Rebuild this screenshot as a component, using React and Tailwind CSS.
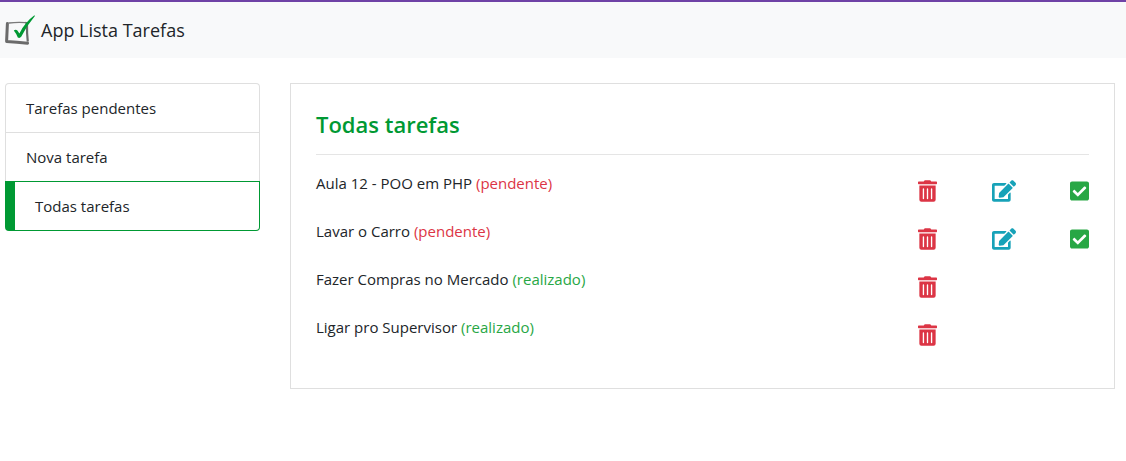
import { FaTrashAlt, FaEdit, FaCheckSquare } from "react-icons/fa";

const links = [
  { label: "Tarefas pendentes" },
  { label: "Nova tarefa" },
  { label: "Todas tarefas", active: true },
];

const tasks = [
  { name: "Aula 12 - POO em PHP", status: "pendente" },
  { name: "Lavar o Carro", status: "pendente" },
  { name: "Fazer Compras no Mercado", status: "realizado" },
  { name: "Ligar pro Supervisor", status: "realizado" },
];

function Logo() {
  return (
    <svg viewBox="0 0 30 30" className="size-[30px]" aria-hidden="true" fill="none">
      <path d="M4 8 Q12 7 20.4 7.6" stroke="#7a7a7a" strokeWidth="1.4" strokeLinecap="round" />
      <path
        d="M20.4 7.8 Q22 7.8 22 10 Q21.8 18 22.8 26.6"
        stroke="#6b6b6b"
        strokeWidth="2.2"
      />
      <path
        d="M2.4 8.6 Q2 17 1.6 26.4 Q12 27 22.6 28.2"
        stroke="#6b6b6b"
        strokeWidth="3"
        strokeLinejoin="round"
        strokeLinecap="round"
      />
      <path
        fill="#009933"
        d="M8.8 15.6 Q10.8 14 12.4 15.6 L14.4 18.4 Q19.5 7.6 29.4 .2 L29.9 1 Q21.8 10.5 16.2 21.8 Q14.6 23.6 12.8 22.4 Q11.2 18.6 8.8 15.6 Z"
      />
    </svg>
  );
}

function SideLink({ label, active }) {
  return (
    <li
      className={
        active
          ? "rounded-b border border-l-[10px] border-[#009933]"
          : "border border-b-0 border-[#dfdfdf] first:rounded-t"
      }
    >
      <a href="#" className="block px-5 py-3 text-[15px] leading-6">
        {label}
      </a>
    </li>
  );
}

function Task({ name, status }) {
  const pending = status === "pendente";
  return (
    <li className="flex h-12 items-start justify-between">
      <p className="text-[15px] leading-6">
        {name}{" "}
        <span className={pending ? "text-[#dc3545]" : "text-[#28a745]"}>({status})</span>
      </p>
      <div className="mt-[9px] flex w-[171px] shrink-0 justify-between">
        <button type="button" aria-label="Remover" className="text-[#dc3545]">
          <FaTrashAlt className="h-[22px] w-[19px]" />
        </button>
        {pending && (
          <>
            <button type="button" aria-label="Editar" className="text-[#17a2b8]">
              <FaEdit className="h-[22px] w-6" />
            </button>
            <button type="button" aria-label="Marcar como realizada" className="text-[#28a745]">
              <FaCheckSquare className="h-[22px] w-[19px]" />
            </button>
          </>
        )}
      </div>
    </li>
  );
}

export default function App() {
  return (
    <div className="min-h-screen border-t-2 border-[#6f42a6] bg-white font-['Open_Sans',sans-serif] text-[#212529]">
      <nav className="bg-[#f8f9fa] px-[5px] py-[13px]">
        <a href="#" className="flex items-center gap-[6px] text-lg leading-[30px]">
          <Logo />
          App Lista Tarefas
        </a>
      </nav>
      <div className="grid grid-cols-[255fr_825fr] items-start gap-[30px] pt-[25px] pr-[11px] pl-[5px]">
        <ul>
          {links.map((link) => (
            <SideLink key={link.label} {...link} />
          ))}
        </ul>
        <main className="border border-[#dfdfdf] px-[25px] pt-6 pb-[25px]">
          <h1 className="text-[22px] leading-8 font-semibold text-[#009933]">Todas tarefas</h1>
          <hr className="mt-[14px] mb-4 border-[#e5e5e5]" />
          <ul>
            {tasks.map((task) => (
              <Task key={task.name} {...task} />
            ))}
          </ul>
        </main>
      </div>
    </div>
  );
}
